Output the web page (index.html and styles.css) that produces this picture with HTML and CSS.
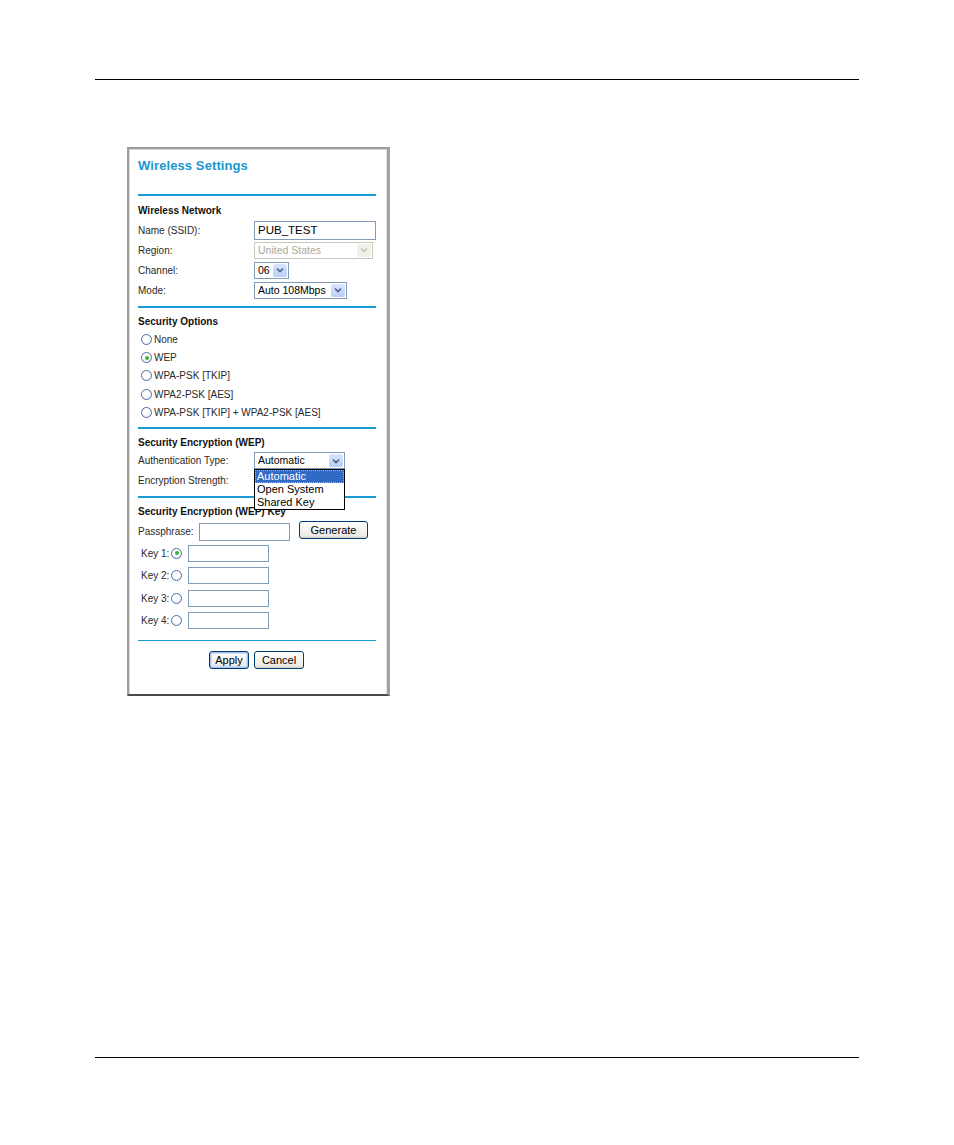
FILE: index.html
```html
<!DOCTYPE html>
<html>
<head>
<meta charset="utf-8">
<link rel="stylesheet" href="styles.css">
</head>
<body>
<div class="page">
  <div class="rule top-rule"></div>
  <div class="frame">
    <div class="title">Wireless Settings</div>
    <div class="bar thick"></div>

    <div class="heading">Wireless Network</div>
    <div class="row"><span class="label">Name (SSID):</span><div class="input name-input">PUB_TEST</div></div>
    <div class="row"><span class="label">Region:</span>
      <div class="select disabled w-region"><span class="val">United States</span><span class="arrow"><svg viewBox="0 0 8 6" width="8" height="6"><path d="M1 1.5 L4 4.5 L7 1.5" fill="none" stroke="currentColor" stroke-width="1.6"/></svg></span></div></div>
    <div class="row"><span class="label">Channel:</span>
      <div class="select w-channel"><span class="val">06</span><span class="arrow"><svg viewBox="0 0 8 6" width="8" height="6"><path d="M1 1.5 L4 4.5 L7 1.5" fill="none" stroke="currentColor" stroke-width="1.6"/></svg></span></div></div>
    <div class="row"><span class="label">Mode:</span>
      <div class="select w-mode"><span class="val">Auto 108Mbps</span><span class="arrow"><svg viewBox="0 0 8 6" width="8" height="6"><path d="M1 1.5 L4 4.5 L7 1.5" fill="none" stroke="currentColor" stroke-width="1.6"/></svg></span></div></div>
    <div class="bar"></div>

    <div class="heading">Security Options</div>
    <div class="radio-row"><span class="radio"></span>None</div>
    <div class="radio-row"><span class="radio checked"></span>WEP</div>
    <div class="radio-row"><span class="radio"></span>WPA-PSK [TKIP]</div>
    <div class="radio-row"><span class="radio"></span>WPA2-PSK [AES]</div>
    <div class="radio-row"><span class="radio"></span>WPA-PSK [TKIP] + WPA2-PSK [AES]</div>
    <div class="bar after-radios"></div>

    <div class="heading">Security Encryption (WEP)</div>
    <div class="row auth-row"><span class="label">Authentication Type:</span>
      <div class="select w-auth"><span class="val">Automatic</span><span class="arrow"><svg viewBox="0 0 8 6" width="8" height="6"><path d="M1 1.5 L4 4.5 L7 1.5" fill="none" stroke="currentColor" stroke-width="1.6"/></svg></span></div>
      <div class="popup">
        <div class="opt sel">Automatic</div>
        <div class="opt">Open System</div>
        <div class="opt">Shared Key</div>
      </div>
    </div>
    <div class="row short"><span class="label">Encryption Strength:</span></div>
    <div class="bar"></div>

    <div class="heading">Security Encryption (WEP) Key</div>
    <div class="pass-row"><span class="pass-label">Passphrase:</span><div class="input pass-input"></div><div class="btn gen">Generate</div></div>
    <div class="key-row"><span class="key-label">Key 1:</span><span class="radio checked"></span><div class="input key-input"></div></div>
    <div class="key-row"><span class="key-label">Key 2:</span><span class="radio"></span><div class="input key-input"></div></div>
    <div class="key-row"><span class="key-label">Key 3:</span><span class="radio"></span><div class="input key-input"></div></div>
    <div class="key-row"><span class="key-label">Key 4:</span><span class="radio"></span><div class="input key-input"></div></div>
    <div class="bar thin"></div>

    <div class="buttons"><div class="btn apply">Apply</div><div class="btn cancel">Cancel</div></div>
  </div>
  <div class="spacer"></div>
  <div class="rule bottom-rule"></div>
</div>
</body>
</html>
```
FILE: styles.css
```css
html, body { margin: 0; padding: 0; background: #fff; }
body { font-family: "Liberation Sans", Arial, sans-serif; color: #2a2a2a; }
.page { width: 954px; height: 1145px; padding-top: 79px; box-sizing: border-box; }
.rule { margin-left: 95px; width: 764px; height: 1px; background: #000; }
.frame {
  margin-top: 67px;
  margin-left: 127px;
  width: 263px;
  height: 549px;
  box-sizing: border-box;
  border-top: 2px solid #9c9c98;
  border-left: 2px solid #9c9c98;
  border-right: 3px solid #a3a39e;
  border-bottom: 2px solid #4a4a48;
  box-shadow: inset 1px 1px 0 #d8d8d4, inset -1px 0 0 #e4e4e0;
  padding-left: 9px;
  padding-right: 11px;
  background: #fff;
}
.title { padding-top: 9px; height: 16px; line-height: 16px; font-size: 13px; font-weight: bold; color: #1a97d0; margin-bottom: 20px; letter-spacing: 0.1px; }
.bar { height: 2px; background: #1a9bd5; width: 238px; margin-top: 6px; }
.bar.thick { margin-top: 0; }
.bar.after-radios { margin-top: 5px; }
.bar.thin { height: 1px; margin-top: 8px; }
.heading { margin-top: 7px; height: 14px; line-height: 14px; font-size: 10px; font-weight: bold; color: #111; margin-bottom: 1px; }
.bar.thick + .heading { margin-top: 8px; margin-bottom: 2px; }
.row { height: 20px; display: flex; align-items: center; font-size: 10px; position: relative; }
.row.short { height: 19px; }
.label { width: 116px; flex: none; }
.input { box-sizing: border-box; border: 1px solid #7f9db9; background: #fff; font-size: 11.5px; line-height: 17px; padding-left: 3px; color: #000; }
.name-input { width: 122px; height: 19px; }
.select { box-sizing: border-box; display: flex; align-items: stretch; border: 1px solid #7f9db9; background: #fff; height: 17px; font-size: 10.5px; color: #000; }
.select .val { flex: 1; padding-left: 3px; line-height: 15px; white-space: nowrap; overflow: hidden; }
.select .arrow { width: 14px; flex: none; margin: 1px; display: flex; align-items: center; justify-content: center; color: #4d6185; background: linear-gradient(#dbe6fd, #b9cdf8); border-radius: 2px; }
.select.disabled { border-color: #c9c7ba; color: #aca899; }
.select.disabled .arrow { background: #f0efea; color: #c9c7ba; }
.w-region { width: 119px; }
.w-channel { width: 35px; }
.w-mode { width: 93px; }
.w-auth { width: 91px; }
.popup { position: absolute; left: 116px; top: 18px; width: 91px; height: 41px; box-sizing: border-box; border: 1px solid #000; background: #fff; z-index: 2; font-size: 11px; color: #000; }
.opt { height: 13px; line-height: 13px; padding-left: 2px; }
.opt.sel { background: #316ac5; color: #fff; outline: 1px dotted #e0b060; outline-offset: -1px; }
.radio-row { height: 18.4px; display: flex; align-items: center; font-size: 10px; padding-left: 3px; }
.radio { width: 11px; height: 11px; box-sizing: border-box; border: 1px solid #4a6fa5; border-radius: 50%; background: radial-gradient(circle at 40% 40%, #fff 40%, #dde4ee); flex: none; margin-right: 2px; position: relative; }
.radio.checked::after { content: ""; position: absolute; left: 2.5px; top: 2.5px; width: 4px; height: 4px; border-radius: 50%; background: #3bb13b; }
.pass-row { margin-top: 3px; height: 20px; display: flex; align-items: center; font-size: 10px; }
.pass-label { width: 61px; flex: none; }
.pass-input { width: 91px; height: 18px; }
.btn { box-sizing: border-box; border: 1px solid #003c74; border-radius: 3px; background: linear-gradient(#fff, #ecebe6 85%, #d6d0c5); font-size: 11px; line-height: 14px; color: #000; text-align: center; display: flex; align-items: center; justify-content: center; }
.gen { margin-left: 9px; width: 69px; height: 18px; align-self: flex-start; margin-top: -1px; }
.key-row { height: 22.5px; display: flex; align-items: center; font-size: 10px; padding-left: 3px; }
.key-label { width: 30px; flex: none; }
.key-row .radio { margin-right: 6px; }
.key-input { width: 81px; height: 17px; }
.buttons { margin-top: 10px; height: 19px; display: flex; align-items: center; padding-left: 71px; gap: 5px; }
.apply { width: 40px; height: 18px; box-shadow: inset 0 0 0 1px #a6c0f0, inset 0 0 0 2px #cfdcf7; }
.cancel { width: 50px; height: 18px; }
.spacer { height: 361px; }
```
